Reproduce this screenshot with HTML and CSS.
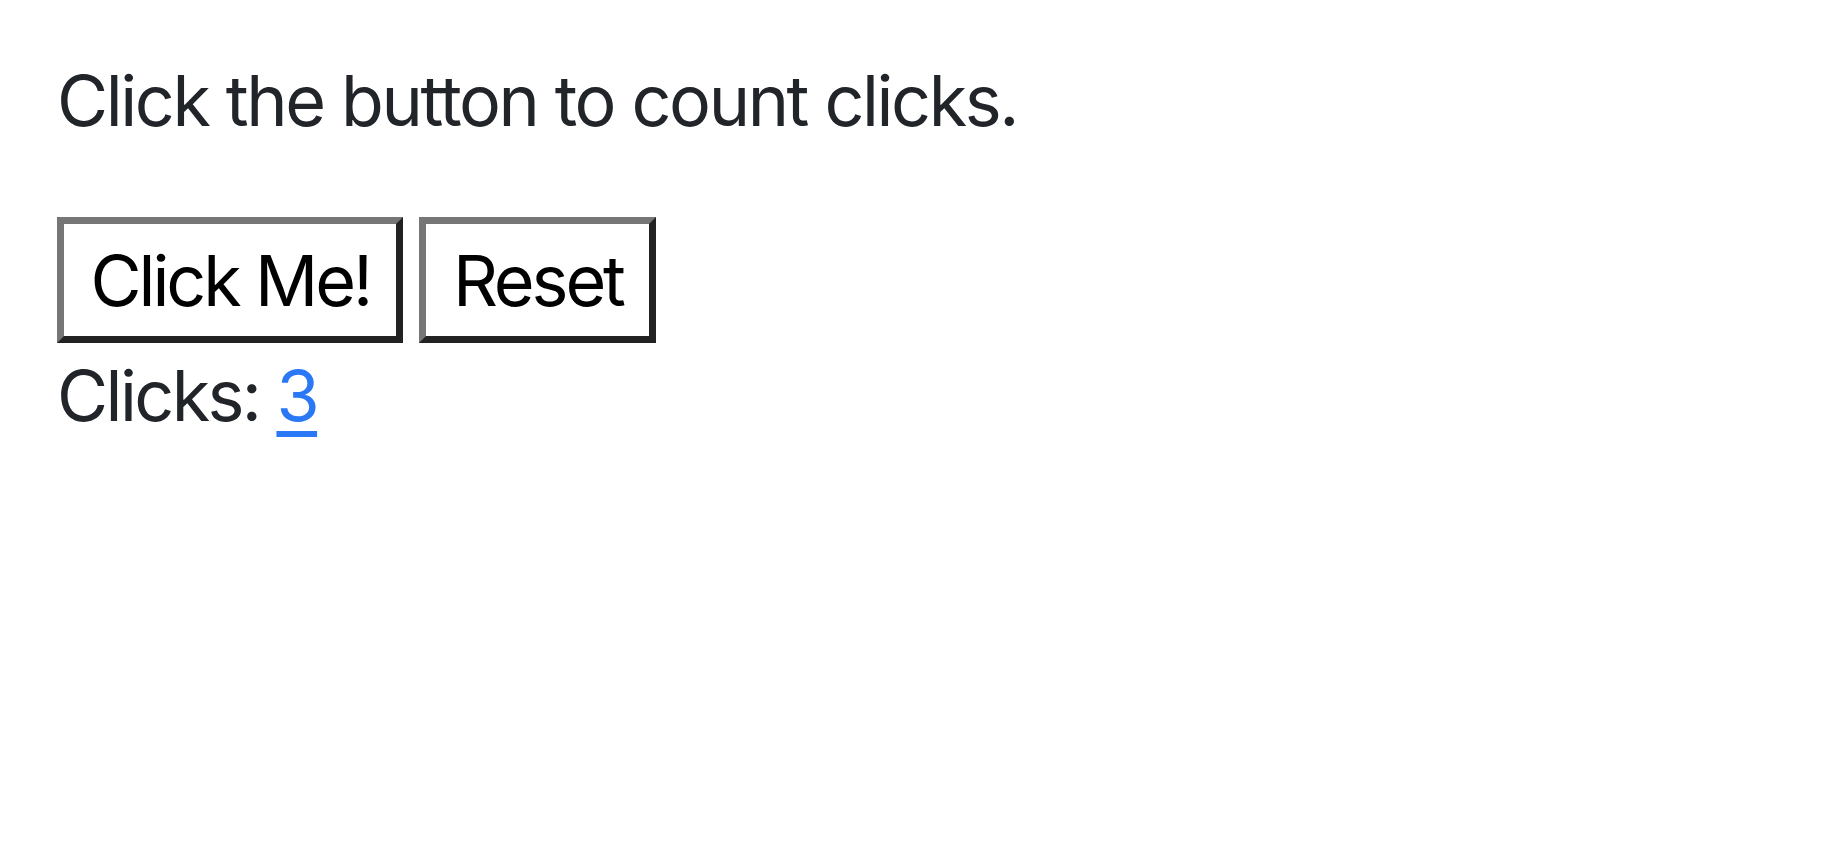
FILE: index.html
```html
<!DOCTYPE html>
<html lang="en">
<head>
<meta charset="utf-8">
<title>Click Counter</title>
<link rel="stylesheet" href="styles.css">
</head>
<body>
<main class="page">
  <p class="intro">Click the button to count clicks.</p>
  <div class="buttons">
    <button class="btn" type="button">Click Me!</button>
    <button class="btn" type="button">Reset</button>
  </div>
  <p class="count">Clicks: <a class="count-value" href="#">3</a></p>
</main>
</body>
</html>
```

FILE: styles.css
```css
html, body {
  margin: 0;
  padding: 0;
  background: #ffffff;
}

body {
  font-family: Inter, "Liberation Sans", Arial, sans-serif;
  font-size: 70px;
  line-height: 1.5;
  color: #212529;
}

.page {
  padding: 48px 57px;
}

.intro {
  margin: 0 0 64px 0;
  letter-spacing: -2.4px;
}

.buttons {
  display: flex;
  align-items: flex-start;
  gap: 16px;
}

.btn {
  font-family: inherit;
  font-size: 70px;
  line-height: 1.5;
  letter-spacing: -3.1px;
  color: #000000;
  background: #ffffff;
  padding: 3.5px 26.5px;
  margin: 0;
  border-width: 7px;
  border-style: solid;
  border-color: #767676 #222222 #222222 #767676;
  border-radius: 0;
  cursor: pointer;
}

.count {
  margin: 0;
  letter-spacing: -2.6px;
}

.count-value {
  color: #2a78f6;
  text-decoration: underline;
  text-decoration-thickness: 6px;
  text-underline-offset: 10px;
}
```
